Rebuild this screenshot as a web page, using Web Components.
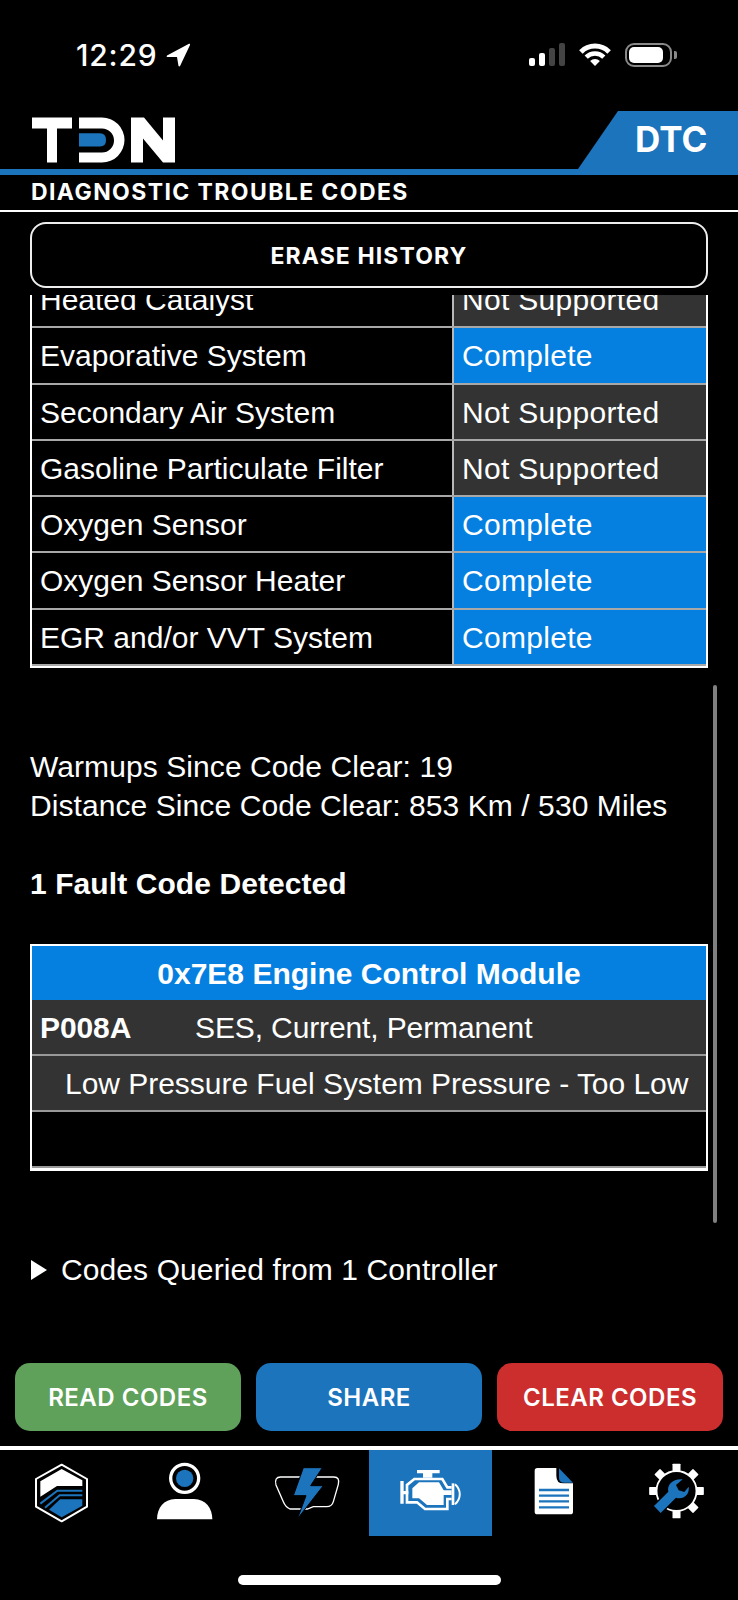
<!DOCTYPE html>
<html>
<head>
<meta charset="utf-8">
<title>DTC</title>
<style>
  html, body { margin: 0; background: #000; }
  body { width: 738px; height: 1600px; overflow: hidden; color: #fff; font-family: "Liberation Sans", Arial, sans-serif; }
  tdn-app { height: 1600px; }
  svg { display: block; }
</style>
</head>
<body>
<tdn-app>
  <status-bar></status-bar>
  <app-header tag="DTC">DIAGNOSTIC TROUBLE CODES</app-header>
  <outline-button>ERASE HISTORY</outline-button>
  <scroll-area>
    <monitor-table>
      <monitor-row label="Heated Catalyst" state="Not Supported"></monitor-row>
      <monitor-row label="Evaporative System" state="Complete"></monitor-row>
      <monitor-row label="Secondary Air System" state="Not Supported"></monitor-row>
      <monitor-row label="Gasoline Particulate Filter" state="Not Supported"></monitor-row>
      <monitor-row label="Oxygen Sensor" state="Complete"></monitor-row>
      <monitor-row label="Oxygen Sensor Heater" state="Complete"></monitor-row>
      <monitor-row label="EGR and/or VVT System" state="Complete"></monitor-row>
    </monitor-table>
    <info-text>
      <div>Warmups Since Code Clear: 19</div>
      <div>Distance Since Code Clear: 853 Km / 530 Miles</div>
      <div>&nbsp;</div>
      <div><b>1 Fault Code Detected</b></div>
    </info-text>
    <dtc-card module="0x7E8 Engine Control Module" code="P008A" flags="SES, Current, Permanent" desc="Low Pressure Fuel System Pressure - Too Low"></dtc-card>
    <disclosure-row>Codes Queried from 1 Controller</disclosure-row>
  </scroll-area>
  <action-bar>
    <action-button color="#5fa15a">READ CODES</action-button>
    <action-button color="#1b74bc">SHARE</action-button>
    <action-button color="#cb2e2d">CLEAR CODES</action-button>
  </action-bar>
  <tab-bar>
    <tab-item>
      <svg viewBox="0 0 225 225" width="75" height="75"><g transform="translate(3 0)">
        <path d="M110 29 186 72V155L110 199 33 155V72Z" fill="none" stroke="#fff" stroke-width="6" stroke-linejoin="round"/>
        <path d="M110 42 172 76V93H96L46 125V79Z" fill="#fff"/>
        <path d="M46 146 97 107H172M60 158 104 121H172" fill="none" stroke="#1b74bc" stroke-width="6"/>
        <path d="M72 164 105 133H172V152L110 187Z" fill="#1b74bc"/>
      </g></svg>
    </tab-item>
    <tab-item>
      <svg viewBox="0 0 225 225" width="75" height="75">
        <circle cx="113" cy="70" r="42" fill="none" stroke="#fff" stroke-width="10"/>
        <circle cx="113" cy="70" r="26" fill="#1b74bc"/>
        <path d="M30 193C30 160 50 132 85 132H141C176 132 196 160 196 193Z" fill="#fff"/>
      </svg>
    </tab-item>
    <tab-item>
      <svg viewBox="0 0 225 225" width="75" height="75">
        <path d="M32 66H192Q210 66 205 88L190 140Q186 155 170 155H130L112 162H60Q46 155 40 140L18 90Q12 66 32 66Z" fill="none" stroke="#fff" stroke-width="4"/>
        <path d="M100 38H157L122 92H160L82 192 108 122H70Z" fill="#1b74bc" stroke="#000" stroke-width="3"/>
      </svg>
    </tab-item>
    <tab-item active>
      <svg viewBox="0 0 225 225" width="75" height="75">
        <path d="M72 45H140V55H118V68H90V55H72Z" fill="#fff"/>
        <path d="M176 97H163L148 72H64L42 90V142H72L96 162H163V132H176" fill="none" stroke="#fff" stroke-width="8"/>
        <path d="M22 78H32V108H46V118H32V146H22Z" fill="#fff"/>
        <path d="M176 85H184V150H176Z" fill="#fff"/>
        <path d="M186 88C205 105 205 130 186 148" fill="none" stroke="#fff" stroke-width="6"/>
        <path d="M58 100 78 82H138L152 106H176V120H152V150H102L78 130H58Z" fill="#fff"/>
      </svg>
    </tab-item>
    <tab-item>
      <svg viewBox="0 0 225 225" width="75" height="75">
        <path d="M64 39H121V62Q121 85 142 85H171V170Q171 178 163 178H64Q56 178 56 170V47Q56 39 64 39Z" fill="#fff"/>
        <path d="M129 40 171 83H145Q129 83 129 68Z" fill="#1b74bc"/>
        <path d="M69 105H159M69 122H159M69 139H159M69 157H159" stroke="#1b74bc" stroke-width="7"/>
      </svg>
    </tab-item>
    <tab-item>
      <svg viewBox="0 0 225 225" width="75" height="75">
        <g transform="translate(112.5 108)" fill="#fff">
          <circle r="60" fill="none" stroke="#fff" stroke-width="5.500"/>
          <rect x="-12" y="-82" width="24" height="22" rx="2"/>
          <rect x="-12" y="-82" width="24" height="22" rx="2" transform="rotate(45)"/>
          <rect x="-12" y="-82" width="24" height="22" rx="2" transform="rotate(90)"/>
          <rect x="-12" y="-82" width="24" height="22" rx="2" transform="rotate(135)"/>
          <rect x="-12" y="-82" width="24" height="22" rx="2" transform="rotate(180)"/>
          <rect x="-12" y="-82" width="24" height="22" rx="2" transform="rotate(225)"/>
          <rect x="-12" y="-82" width="24" height="22" rx="2" transform="rotate(270)"/>
          <rect x="-12" y="-82" width="24" height="22" rx="2" transform="rotate(315)"/>
        </g>
        <path transform="translate(3 0)" d="M42 153 85 110C80 88 100 70 128 73L108 90 116 106 133 111 146 95C150 118 130 135 108 128L62 174Z" fill="#1b74bc" stroke="#000" stroke-width="8" paint-order="stroke"/>
      </svg>
    </tab-item>
  </tab-bar>
  <home-indicator></home-indicator>
</tdn-app>

<script>
function define(name, css, html) {
  customElements.define(name, class extends HTMLElement {
    connectedCallback() {
      if (this.shadowRoot) return;
      this.attachShadow({ mode: 'open' });
      const body = typeof html === 'function' ? html(this) : (html || '<slot></slot>');
      this.shadowRoot.innerHTML = `<style>${css}</style>${body}`;
    }
  });
}

const sans = '"Inter", "Liberation Sans", sans-serif';

define('tdn-app', `:host { display: flex; flex-direction: column; }`);

define('status-bar', `
  :host { display: flex; height: 100px; flex: none; padding: 43px 61px 0 76px; box-sizing: border-box; font-family: ${sans}; }
  .time { font-size: 30px; font-weight: 500; letter-spacing: 0.8px; line-height: 24px; }
  .arrow { margin: 0 0 0 9px; }
  .right { margin-left: auto; display: flex; align-items: flex-start; }
  .bars { display: flex; align-items: flex-end; gap: 4px; height: 23px; }
  .bars i { width: 6px; background: #fff; border-radius: 2px; }
  .bars i.off { background: #444; }
  .wifi { margin-left: 14px; }
  .batt { margin-left: 14px; width: 47px; height: 24px; box-sizing: border-box; border: 2px solid #8a8a8a; border-radius: 9px; padding: 2px; }
  .batt div { height: 100%; width: 34px; background: #fff; border-radius: 5px; }
  .cap { width: 3px; height: 8px; margin: 8px 0 0 2px; background: #8a8a8a; border-radius: 0 2px 2px 0; }
  svg { display: block; }
`, () => `
  <div class="time">12:29</div>
  <svg class="arrow" width="24" height="24" viewBox="0 0 24 24"><path d="M23 0.8 1 12.6Q0 14 2 14L11 14 12.5 23Q13.5 24 14.2 22.8L24 2Q24.300 0.300 23 0.800Z" fill="#fff"/></svg>
  <div class="right">
    <div class="bars"><i style="height:8px"></i><i style="height:13px"></i><i class="off" style="height:18px"></i><i class="off" style="height:23px"></i></div>
    <svg class="wifi" width="32" height="24" viewBox="0 0 32 24">
      <path d="M1.900 8.900A20 20 0 0 1 30.100 8.900" fill="none" stroke="#fff" stroke-width="5"/>
      <path d="M7.200 14.200A12.500 12.500 0 0 1 24.800 14.200" fill="none" stroke="#fff" stroke-width="4.500"/>
      <path d="M16 23 11.100 18.100A7 7 0 0 1 20.900 18.100Z" fill="#fff"/>
    </svg>
    <div class="batt"><div></div></div>
    <div class="cap"></div>
  </div>
`);

define('app-header', `
  :host { display: block; flex: none; font-family: ${sans}; }
  .top { display: flex; align-items: flex-end; height: 75px; box-sizing: border-box; border-bottom: 6px solid #1b74bc; }
  .logo { margin: 0 0 6px 32px; }
  .tag { margin-left: auto; width: 160px; height: 58px; box-sizing: border-box; padding-left: 57px; background: #1b74bc; clip-path: polygon(40px 0, 100% 0, 100% 100%, 0 100%); font-size: 35px; font-weight: 700; line-height: 56px; color: #fff; }
  .title { height: 35px; box-sizing: border-box; padding-left: 31px; font-size: 23px; font-weight: 700; letter-spacing: 1.4px; line-height: 34px; }
  .rule { height: 2px; background: #fff; }
`, (el) => `
  <div class="top">
    <svg class="logo" width="143" height="46" viewBox="12 12 143 45">
      <path d="M12 12H52V23H37V57H27V23H12Z" fill="#fff"/>
      <path d="M59 12H82A22.500 22.500 0 0 1 82 57H59V47H82A12 12 0 0 0 82 23H59Z" fill="#fff"/>
      <path d="M59 27.700H80Q86 27.700 86 34.500Q86 41 80 41H59Z" fill="#1b74bc"/>
      <path d="M111 12H124L143 35V12H155V57H143L123 33V57H111Z" fill="#fff"/>
    </svg>
    <div class="tag">${el.getAttribute('tag')}</div>
  </div>
  <div class="title"><slot></slot></div>
  <div class="rule"></div>
`);

define('outline-button', `
  :host { display: flex; flex: none; align-items: center; justify-content: center; box-sizing: border-box; height: 66px; margin: 10px 30px 7px; padding-top: 2px; border: 2px solid #eee; border-radius: 16px; font: 700 23px ${sans}; letter-spacing: 1.1px; }
`);

define('scroll-area', `
  :host { display: block; position: relative; flex: 1; min-height: 0; overflow: hidden; }
  .thumb { position: absolute; left: 713px; top: 390px; width: 4px; height: 538px; border-radius: 2px; background: #808080; }
`, () => `<slot></slot><div class="thumb"></div>`);

define('monitor-table', `
  :host { display: block; margin: -23px 30px 0; border: solid #fff; border-width: 0 2px 2px; font-size: 30px; }
`);

define('monitor-row', `
  :host { display: grid; grid-template-columns: 422px 1fr; height: 56.300px; box-sizing: border-box; border-bottom: 2px solid #a8a8a8; line-height: 55px; }
  div { padding-left: 8px; white-space: nowrap; overflow: hidden; }
  .label { border-right: 2px solid #b8b8b8; }
  .on, .off { letter-spacing: 0.3px; }
  .on { background: #0680e0; }
  .off { background: #333; }
`, (el) => {
  const state = el.getAttribute('state');
  return `<div class="label">${el.getAttribute('label')}</div><div class="${state === 'Complete' ? 'on' : 'off'}">${state}</div>`;
});

define('info-text', `
  :host { display: block; margin: 79px 30px 41px; font-size: 30px; letter-spacing: 0.08px; line-height: 39px; white-space: nowrap; }
`);

define('dtc-card', `
  :host { display: block; margin: 0 30px; border: 2px solid #fff; border-bottom-width: 3px; font-size: 30px; }
  .row { height: 56px; box-sizing: border-box; border-bottom: 2px solid #999; line-height: 56px; background: #333; white-space: nowrap; overflow: hidden; }
  .head { height: 54px; background: #0680e0; border: 0; text-align: center; font-weight: 700; line-height: 56px; }
  .code { padding-left: 8px; display: flex; }
  .code b { width: 155px; letter-spacing: -0.1px; }
  .code span { letter-spacing: -0.12px; }
  .desc { padding-left: 33px; letter-spacing: -0.03px; }
  .empty { background: #000; }
`, (el) => `
  <div class="row head">${el.getAttribute('module')}</div>
  <div class="row code"><b>${el.getAttribute('code')}</b><span>${el.getAttribute('flags')}</span></div>
  <div class="row desc">${el.getAttribute('desc')}</div>
  <div class="row empty"></div>
`);

define('disclosure-row', `
  :host { display: flex; align-items: center; margin: 79px 31px 0; height: 40px; font-size: 30px; letter-spacing: 0.1px; white-space: nowrap; }
  i { width: 0; height: 0; border: solid transparent; border-width: 10px 0 10px 16px; border-left-color: #fff; margin-right: 14px; }
`, () => `<i></i><slot></slot>`);

define('action-bar', `
  :host { display: grid; flex: none; grid-template-columns: repeat(3, 226px); gap: 15px; padding: 0 15px 15px; }
`);

define('action-button', `
  :host { display: flex; align-items: center; justify-content: center; height: 68px; border-radius: 15px; font: 600 24px ${sans}; letter-spacing: 0.5px; color: #fff; }
`, (el) => `<style>:host { background: ${el.getAttribute('color')}; }</style><slot></slot>`);

define('tab-bar', `
  :host { display: grid; flex: none; grid-template-columns: repeat(6, 123px); height: 86px; border-top: 4px solid #fff; }
`);

define('tab-item', `
  :host { display: flex; justify-content: center; padding-top: 5px; box-sizing: border-box; height: 86px; }
  :host([active]) { background: #1b74bc; }
`);

define('home-indicator', `
  :host { display: flex; flex: none; height: 64px; justify-content: center; }
  div { width: 263px; height: 10px; margin-top: 39px; border-radius: 5px; background: #fff; }
`, () => `<div></div>`);
</script>
</body>
</html>
